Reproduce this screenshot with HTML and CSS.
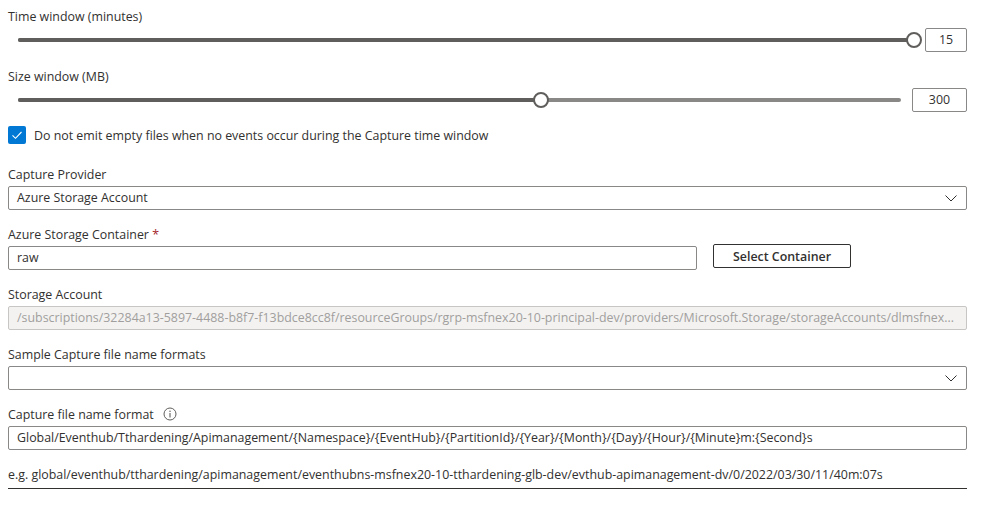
FILE: index.html
```html
<!DOCTYPE html>
<html lang="en">
<head>
<meta charset="utf-8">
<title>Capture settings</title>
<link rel="stylesheet" href="styles.css">
</head>
<body>
<form class="form">
  <div class="field">
    <label class="label">Time window (minutes)</label>
    <div class="slider-row">
      <div class="slider">
        <div class="track"><div class="fill" style="width:100%"></div><span class="thumb" style="left:100%"></span></div>
      </div>
      <div class="num num-sm">15</div>
    </div>
  </div>
  <div class="field">
    <label class="label">Size window (MB)</label>
    <div class="slider-row">
      <div class="slider">
        <div class="track"><div class="fill" style="width:59.2%"></div><span class="thumb" style="left:59.2%"></span></div>
      </div>
      <div class="num num-md">300</div>
    </div>
  </div>
  <div class="check-row">
    <span class="checkbox">
      <svg viewBox="0 0 18 18" width="18" height="18"><path d="M4.5 9.3l3 3 6-6.3" fill="none" stroke="#fff" stroke-width="1.1"/></svg>
    </span>
    <span class="check-text">Do not emit empty files when no events occur during the Capture time window</span>
  </div>
  <div class="field field-after-check">
    <label class="label">Capture Provider</label>
    <div class="select">
      <span class="value">Azure Storage Account</span>
      <svg class="chev" viewBox="0 0 12 7" width="12" height="7"><path d="M0.5 0.5l5.5 5.5 5.5-5.5" fill="none" stroke="#323130" stroke-width="1"/></svg>
    </div>
  </div>
  <div class="field">
    <label class="label">Azure Storage Container <span class="req">*</span></label>
    <div class="container-row">
      <div class="input input-container">raw</div>
      <button type="button" class="btn">Select Container</button>
    </div>
  </div>
  <div class="field">
    <label class="label">Storage Account</label>
    <div class="input input-disabled">/subscriptions/32284a13-5897-4488-b8f7-f13bdce8cc8f/resourceGroups/rgrp-msfnex20-10-principal-dev/providers/Microsoft.Storage/storageAccounts/dlmsfnex...</div>
  </div>
  <div class="field">
    <label class="label">Sample Capture file name formats</label>
    <div class="select">
      <span class="value"></span>
      <svg class="chev" viewBox="0 0 12 7" width="12" height="7"><path d="M0.5 0.5l5.5 5.5 5.5-5.5" fill="none" stroke="#323130" stroke-width="1"/></svg>
    </div>
  </div>
  <div class="field">
    <label class="label">Capture file name format <span class="info"><svg viewBox="0 0 14 14" width="14" height="14"><circle cx="7" cy="7" r="6" fill="none" stroke="#605e5c" stroke-width="1"/><circle cx="7" cy="4.3" r="0.75" fill="#605e5c"/><path d="M7 6.1v4.3" stroke="#605e5c" stroke-width="1.1"/></svg></span></label>
    <div class="input">Global/Eventhub/Tthardening/Apimanagement/{Namespace}/{EventHub}/{PartitionId}/{Year}/{Month}/{Day}/{Hour}/{Minute}m:{Second}s</div>
  </div>
  <div class="example">e.g. global/eventhub/tthardening/apimanagement/eventhubns-msfnex20-10-tthardening-glb-dev/evthub-apimanagement-dv/0/2022/03/30/11/40m:07s</div>
</form>
</body>
</html>
```

FILE: styles.css
```css
* { box-sizing: border-box; }
html, body { margin: 0; background: #fff; }
body {
  font-family: "Open Sans", "Noto Sans", "Liberation Sans", sans-serif;
  font-size: 12.4px;
  color: #323130;
}
.form {
  width: 987px;
  padding: 6px 20px 0 8px;
  display: flex;
  flex-direction: column;
}
.field { display: flex; flex-direction: column; margin-bottom: 14px; }
.label { display: block; height: 20px; line-height: 22px; margin-bottom: 2px; }
.req { color: #a4262c; }
.slider-row { display: flex; align-items: center; height: 24px; }
.slider { flex: 1; padding-left: 10px; margin-right: 11px; }
.track {
  position: relative;
  height: 4px;
  border-radius: 2px;
  background: #8a8886;
}
.fill { height: 4px; border-radius: 2px; background: #605e5c; }
.thumb {
  position: absolute;
  top: 50%;
  width: 16px;
  height: 16px;
  margin: -8px 0 0 -8px;
  border: 2px solid #605e5c;
  border-radius: 50%;
  background: #fff;
}
.num {
  height: 24px;
  line-height: 22px;
  border: 1px solid #8a8886;
  border-radius: 2px;
  text-align: center;
}
.num-sm { width: 42px; }
.num-md { width: 55px; }
.check-row { display: flex; align-items: center; gap: 8px; height: 18px; margin-bottom: 20px; }
.checkbox {
  width: 18px; height: 18px;
  border-radius: 2px;
  background: #0078d4;
  display: flex;
}
.select, .input {
  height: 24px;
  border: 1px solid #8a8886;
  border-radius: 2px;
  padding: 0 8px;
  line-height: 22px;
  white-space: nowrap;
  overflow: hidden;
  text-overflow: ellipsis;
}
.select { display: flex; align-items: center; justify-content: space-between; padding-right: 9px; }
.chev { flex: none; }
.container-row { display: flex; align-items: flex-start; gap: 16px; }
.input-container { width: 689px; }
.btn {
  font: inherit;
  font-weight: 600;
  color: #323130;
  background: #fff;
  border: 1px solid #323130;
  border-radius: 2px;
  width: 138px;
  height: 24px;
  padding: 0;
  margin-top: -2px;
}
.input-disabled { background: #f3f2f1; border-color: #c8c6c4; color: #a19f9d; }
.info { display: inline-flex; vertical-align: middle; margin-left: 6px; position: relative; top: -2px; }
.example {
  line-height: 22px;
  height: 25px;
  border-bottom: 1px solid #323130;
}
```
